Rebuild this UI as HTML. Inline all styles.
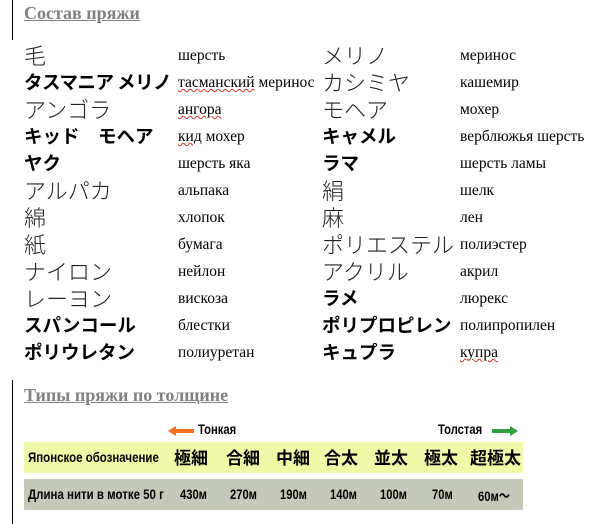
<!DOCTYPE html>
<html><head><meta charset="utf-8"><style>
body{margin:0;width:606px;height:524px;background:#fff;position:relative;overflow:hidden;font-family:"Liberation Serif",serif}
.vl{position:absolute;left:12px;width:1px;background:#000}
.h{position:absolute;left:24px;font:bold 18px "Liberation Serif",serif;color:#808080;text-decoration:underline}
.r{position:absolute;height:27px;line-height:27px;white-space:nowrap}
.j{position:absolute;font-family:"Noto Sans CJK JP",sans-serif;font-size:22px;color:#222;font-weight:300}
.b{font-size:18.5px;font-weight:bold;color:#000}
.t{position:absolute;font-size:15.5px;color:#000}
.w{text-decoration:underline wavy #d33;text-decoration-thickness:1px}
.tb{position:absolute;left:24px;width:499px;font-family:"Liberation Sans","Noto Sans CJK JP",sans-serif;font-weight:bold}
.tb span{position:absolute;top:0;white-space:nowrap}
.n{font-size:14px;transform:scaleX(0.8);transform-origin:left}
.l{font-size:14px;transform:scaleX(0.82);transform-origin:left}
.k{font-size:17px}
</style></head><body>
<div class="vl" style="top:0;height:40px"></div>
<div class="vl" style="top:380px;height:144px"></div>
<div class="h" style="top:3px">Состав пряжи</div>
<div class="h" style="top:385px">Типы пряжи по толщине</div>

<div class="r" style="top:42px"><span class="j" style="left:24px">毛</span><span class="t" style="left:178px">шерсть</span><span class="j" style="left:322px">メリノ</span><span class="t" style="left:460px">меринос</span></div>
<div class="r" style="top:69px"><span class="j b" style="left:24px;letter-spacing:-0.5px">タスマニア メリノ</span><span class="t" style="left:178px"><span class="w">тасманский</span> меринос</span><span class="j" style="left:322px">カシミヤ</span><span class="t" style="left:460px">кашемир</span></div>
<div class="r" style="top:96px"><span class="j" style="left:24px">アンゴラ</span><span class="t w" style="left:178px">ангора</span><span class="j" style="left:322px">モヘア</span><span class="t" style="left:460px">мохер</span></div>
<div class="r" style="top:123px"><span class="j b" style="left:24px">キッド　モヘア</span><span class="t" style="left:178px"><span class="w">кид</span> мохер</span><span class="j b" style="left:322px">キャメル</span><span class="t" style="left:460px">верблюжья шерсть</span></div>
<div class="r" style="top:150px"><span class="j b" style="left:24px">ヤク</span><span class="t" style="left:178px">шерсть яка</span><span class="j b" style="left:322px">ラマ</span><span class="t" style="left:460px">шерсть ламы</span></div>
<div class="r" style="top:177px"><span class="j" style="left:24px">アルパカ</span><span class="t" style="left:178px">альпака</span><span class="j" style="left:322px">絹</span><span class="t" style="left:460px">шелк</span></div>
<div class="r" style="top:204px"><span class="j" style="left:24px">綿</span><span class="t" style="left:178px">хлопок</span><span class="j" style="left:322px">麻</span><span class="t" style="left:460px">лен</span></div>
<div class="r" style="top:231px"><span class="j" style="left:24px">紙</span><span class="t" style="left:178px">бумага</span><span class="j" style="left:322px">ポリエステル</span><span class="t" style="left:460px">полиэстер</span></div>
<div class="r" style="top:258px"><span class="j" style="left:24px">ナイロン</span><span class="t" style="left:178px">нейлон</span><span class="j" style="left:322px">アクリル</span><span class="t" style="left:460px">акрил</span></div>
<div class="r" style="top:285px"><span class="j" style="left:24px">レーヨン</span><span class="t" style="left:178px">вискоза</span><span class="j b" style="left:322px">ラメ</span><span class="t" style="left:460px">люрекс</span></div>
<div class="r" style="top:312px"><span class="j b" style="left:24px">スパンコール</span><span class="t" style="left:178px">блестки</span><span class="j b" style="left:322px">ポリプロピレン</span><span class="t" style="left:460px">полипропилен</span></div>
<div class="r" style="top:339px"><span class="j b" style="left:24px">ポリウレタン</span><span class="t" style="left:178px">полиуретан</span><span class="j b" style="left:322px">キュプラ</span><span class="t" style="left:460px"><span class="w">купра</span></span></div>

<svg style="position:absolute;left:168px;top:426px" width="28" height="10"><polygon points="0,5 8,0 8,3 26,3 26,7 8,7 8,10" fill="#f07020"/></svg>
<div class="tb" style="top:421px;left:0;width:606px;"><span class="n" style="left:198px">Тонкая</span><span class="n" style="left:438px">Толстая</span></div>
<svg style="position:absolute;left:492px;top:426px" width="28" height="10"><polygon points="26,5 18,0 18,3 0,3 0,7 18,7 18,10" fill="#30a040"/></svg>

<div class="tb" style="top:442px;height:31px;background:#f0f9a8;">
<span class="l" style="left:4px;top:7px">Японское обозначение</span>
<span class="k" style="left:150px;top:2px">極細</span>
<span class="k" style="left:202px;top:2px">合細</span>
<span class="k" style="left:252px;top:2px">中細</span>
<span class="k" style="left:300px;top:2px">合太</span>
<span class="k" style="left:350px;top:2px">並太</span>
<span class="k" style="left:400px;top:2px">極太</span>
<span class="k" style="left:446px;top:2px">超極太</span>
</div>
<div class="tb" style="top:479px;height:31px;background:#c5c9b8;">
<span class="l" style="left:4px;top:7px">Длина нити в мотке 50 г</span>
<span class="n" style="left:156px;top:7px">430м</span>
<span class="n" style="left:206px;top:7px">270м</span>
<span class="n" style="left:256px;top:7px">190м</span>
<span class="n" style="left:306px;top:7px">140м</span>
<span class="n" style="left:356px;top:7px">100м</span>
<span class="n" style="left:408px;top:7px">70м</span>
<span class="n" style="left:454px;top:7px">60м～</span>
</div>
</body></html>
